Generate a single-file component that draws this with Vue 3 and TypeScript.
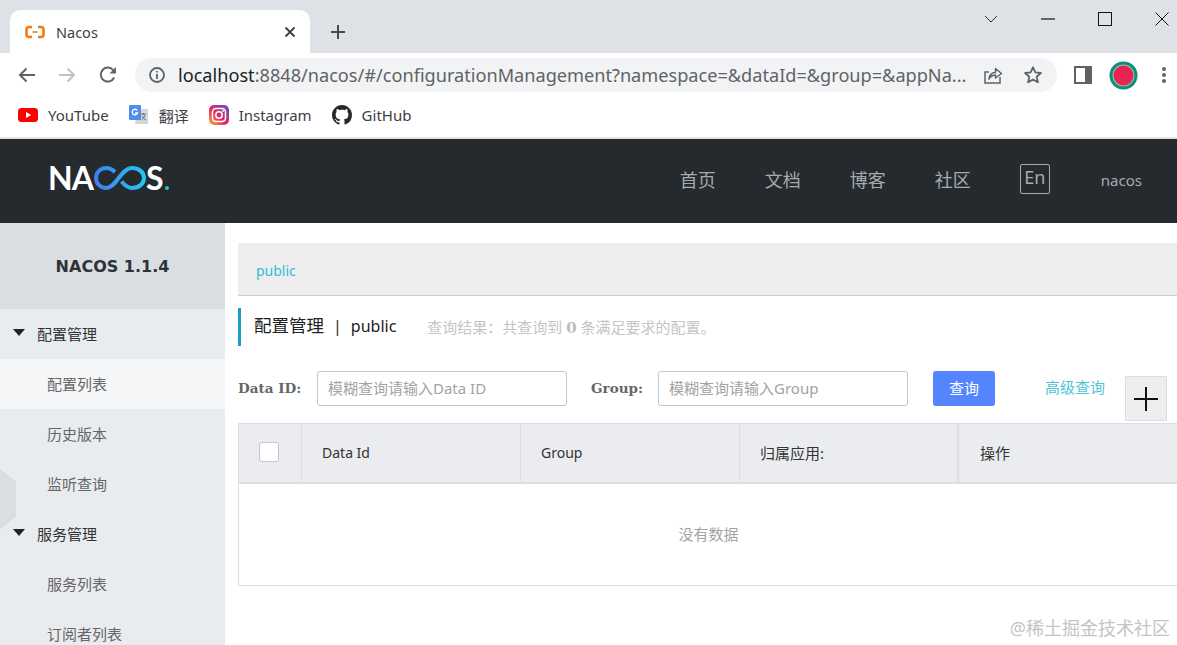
<script setup lang="ts">
const navItems = ['首页', '文档', '博客', '社区']
const columns = ['Data Id', 'Group', '归属应用:', '操作']

interface MenuGroup {
  title: string
  items: { label: string; active?: boolean }[]
}

const menu: MenuGroup[] = [
  {
    title: '配置管理',
    items: [{ label: '配置列表', active: true }, { label: '历史版本' }, { label: '监听查询' }],
  },
  {
    title: '服务管理',
    items: [{ label: '服务列表' }, { label: '订阅者列表' }],
  },
]
</script>

<template>
  <div class="window">
    <div class="tabstrip">
      <div class="tab">
        <svg class="favicon" width="20" height="14" viewBox="0 0 20 14">
          <path d="M7 2H4Q1.500 2 1.500 4.500V9.500Q1.500 12 4 12H7M13 2H16Q18.500 2 18.500 4.500V9.500Q18.500 12 16 12H13" fill="none" stroke="#f07a1a" stroke-width="2.600" />
          <path d="M7.500 7H12.500" stroke="#f07a1a" stroke-width="1.600" />
        </svg>
        <span class="tab-title">Nacos</span>
        <svg class="tab-close" width="12" height="12" viewBox="0 0 12 12">
          <path d="M1.500 1.500L10.500 10.500M10.500 1.500L1.500 10.500" stroke="#3c4043" stroke-width="1.800" />
        </svg>
      </div>
      <svg class="new-tab" width="16" height="16" viewBox="0 0 16 16">
        <path d="M8 1V15M1 8H15" stroke="#45494d" stroke-width="2" />
      </svg>
      <div class="window-buttons">
        <svg width="14" height="8" viewBox="0 0 14 8">
          <path d="M1 1L7 7L13 1" fill="none" stroke="#333" stroke-width="1" />
        </svg>
        <svg width="14" height="14" viewBox="0 0 14 14">
          <path d="M0 7H14" stroke="#111" stroke-width="1.200" />
        </svg>
        <svg width="14" height="14" viewBox="0 0 14 14">
          <rect x="0.500" y="0.500" width="13" height="13" fill="none" stroke="#111" stroke-width="1" />
        </svg>
        <svg width="14" height="14" viewBox="0 0 14 14">
          <path d="M0.500 0.500L13.500 13.500M13.500 0.500L0.500 13.500" stroke="#111" stroke-width="1" />
        </svg>
      </div>
    </div>

    <div class="toolbar">
      <svg width="18" height="16" viewBox="0 0 18 16">
        <path d="M17 8H2M8.500 1.500L2 8L8.500 14.500" fill="none" stroke="#5f6368" stroke-width="2" />
      </svg>
      <svg class="disabled" width="18" height="16" viewBox="0 0 18 16">
        <path d="M1 8H16M9.500 1.500L16 8L9.500 14.500" fill="none" stroke="#bdc1c6" stroke-width="2" />
      </svg>
      <svg class="reload" width="18" height="18" viewBox="0 0 18 18">
        <path d="M15.200 11.500A7 7 0 1 1 14.500 4.500" fill="none" stroke="#5f6368" stroke-width="2" />
        <path d="M17 1V7.500H10.500Z" fill="#5f6368" />
      </svg>
      <div class="omnibox">
        <svg class="info" width="18" height="18" viewBox="0 0 18 18">
          <circle cx="9" cy="9" r="7" fill="none" stroke="#5f6368" stroke-width="1.800" />
          <path d="M9 8V13M9 5V6.600" stroke="#5f6368" stroke-width="1.800" />
        </svg>
        <span class="url"><b>localhost</b>:8848/nacos/#/configurationManagement?namespace=&amp;dataId=&amp;group=&amp;appNa...</span>
        <svg class="share" width="20" height="20" viewBox="0 0 20 20">
          <path d="M17 12V18H2V7H6" fill="none" stroke="#5f6368" stroke-width="1.500" />
          <path d="M6 14C6.500 9.500 9 7.500 12.500 7.500V3.500L18.500 8.500L12.500 13V10C9.500 10 7.500 11.500 6 14Z" fill="none" stroke="#5f6368" stroke-width="1.500" stroke-linejoin="round" />
        </svg>
        <svg class="star" width="20" height="20" viewBox="0 0 20 20">
          <path d="M10 2.200L12.300 7.400L17.900 8L13.700 11.700L14.900 17.300L10 14.400L5.100 17.300L6.300 11.700L2.100 8L7.700 7.400Z" fill="none" stroke="#5f6368" stroke-width="1.800" stroke-linejoin="round" />
        </svg>
      </div>
      <svg class="side-panel" width="18" height="18" viewBox="0 0 18 18">
        <rect width="18" height="18" fill="#5f6368" />
        <rect x="2" y="2" width="9" height="14" fill="#fff" />
      </svg>
      <svg class="avatar" width="29" height="29" viewBox="0 0 29 29">
        <circle cx="14.500" cy="14.500" r="14" fill="#0b8f78" />
        <circle cx="14.500" cy="14.500" r="11" fill="#8cc4b2" />
        <circle cx="14.500" cy="14.500" r="10" fill="#ea2450" />
      </svg>
      <svg class="dots" width="6" height="18" viewBox="0 0 6 18">
        <circle cx="3" cy="3" r="2" fill="#5f6368" />
        <circle cx="3" cy="9" r="2" fill="#5f6368" />
        <circle cx="3" cy="15" r="2" fill="#5f6368" />
      </svg>
    </div>

    <div class="bookmarks">
      <div class="bookmark">
        <svg width="20" height="14" viewBox="0 0 20 14">
          <rect width="20" height="14" rx="3.500" fill="#f00" />
          <path d="M8 4L13.200 7L8 10Z" fill="#fff" />
        </svg>
        <span>YouTube</span>
      </div>
      <div class="bookmark">
        <svg width="20" height="20" viewBox="0 0 20 20">
          <path d="M9 4H19V19H6Z" fill="#d4d6d9" />
          <rect width="12" height="15" rx="1" fill="#4d8cf0" />
          <path d="M8.300 5.500A2.800 2.800 0 1 0 8.600 8H6" fill="none" stroke="#fff" stroke-width="1.300" />
          <path d="M12 9H17M14.500 8V10M16 10C15 13 13.500 14.500 12.500 15M13 11C14 13 15.500 14.500 17 15" fill="none" stroke="#666" stroke-width="0.900" />
        </svg>
        <span>翻译</span>
      </div>
      <div class="bookmark">
        <svg width="20" height="20" viewBox="0 0 20 20">
          <defs>
            <linearGradient id="insta" x1="0" y1="1" x2="1" y2="0">
              <stop offset="0" stop-color="#fdb13d" />
              <stop offset="0.450" stop-color="#e4285f" />
              <stop offset="1" stop-color="#5b4fd6" />
            </linearGradient>
          </defs>
          <rect width="20" height="20" rx="5" fill="url(#insta)" />
          <rect x="3.500" y="3.500" width="13" height="13" rx="3.500" fill="none" stroke="#fff" stroke-width="1.500" />
          <circle cx="10" cy="10" r="3.200" fill="none" stroke="#fff" stroke-width="1.500" />
          <circle cx="14" cy="6" r="0.900" fill="#fff" />
        </svg>
        <span>Instagram</span>
      </div>
      <div class="bookmark">
        <svg width="20" height="20" viewBox="0 0 16 16">
          <path fill="#24292e" d="M8 0C3.580 0 0 3.580 0 8c0 3.540 2.290 6.530 5.470 7.590.4.070.55-.17.55-.38 0-.19-.01-.82-.01-1.490-2.010.37-2.530-.49-2.690-.94-.09-.23-.48-.94-.82-1.130-.28-.15-.68-.52-.01-.53.630-.01 1.080.580 1.230.820.720 1.210 1.870.870 2.330.660.070-.520.280-.870.510-1.070-1.780-.200-3.640-.890-3.640-3.950 0-.870.310-1.590.820-2.150-.080-.200-.360-1.020.080-2.120 0 0 .670-.210 2.200.820.640-.180 1.320-.270 2-.270s1.360.090 2 .270c1.530-1.040 2.200-.820 2.200-.820.440 1.100.160 1.920.080 2.120.510.560.820 1.270.820 2.150 0 3.070-1.870 3.750-3.650 3.950.290.250.540.730.540 1.480 0 1.070-.010 1.930-.010 2.200 0 .210.150.460.550.380A8.013 8.013 0 0 0 16 8c0-4.420-3.580-8-8-8z" />
        </svg>
        <span>GitHub</span>
      </div>
    </div>

    <header class="site-header">
      <div class="logo">
        <span class="logo-na">NA</span>
        <svg width="52" height="24" viewBox="0 0 52 24">
          <defs>
            <linearGradient id="loop" x1="0" y1="0" x2="1" y2="0">
              <stop offset="0" stop-color="#3d7ff0" />
              <stop offset="1" stop-color="#26c6ee" />
            </linearGradient>
          </defs>
          <path d="M21 6C18.500 3.500 15.500 2 12.500 2C6.500 2 2 6.300 2 12C2 17.700 6.500 22 12.500 22C22 22 27 2 38 2C45 2 50 6.300 50 12C50 17.700 45 22 38 22C33 22 30 18.500 27.500 15.500" fill="none" stroke="url(#loop)" stroke-width="4" />
        </svg>
        <span>S</span>
        <i class="logo-dot"></i>
      </div>
      <nav class="site-nav">
        <a v-for="item in navItems" :key="item">{{ item }}</a>
        <span class="lang">En</span>
        <span class="user">nacos</span>
      </nav>
    </header>

    <div class="body">
      <aside class="sidebar">
        <div class="side-title">NACOS 1.1.4</div>
        <div class="hexagon"></div>
        <template v-for="group in menu" :key="group.title">
          <div class="menu-group">
            <i class="caret"></i>
            <span>{{ group.title }}</span>
          </div>
          <div
            v-for="item in group.items"
            :key="item.label"
            class="menu-item"
            :class="{ active: item.active }"
          >
            {{ item.label }}
          </div>
        </template>
      </aside>

      <main class="content">
        <div class="namespace">public</div>

        <div class="page-title">
          <h2>配置管理<span class="sep">|</span><span class="ns">public</span></h2>
          <p>查询结果：共查询到 <b>0</b> 条满足要求的配置。</p>
        </div>

        <form class="filters" @submit.prevent>
          <label class="data-label">Data ID:</label>
          <input class="data-input" placeholder="模糊查询请输入Data ID" />
          <label class="group-label">Group:</label>
          <input class="group-input" placeholder="模糊查询请输入Group" />
          <button class="search" type="submit">查询</button>
          <a class="advanced">高级查询</a>
          <button class="add" type="button" aria-label="新建">
            <svg width="26" height="26" viewBox="0 0 26 26">
              <path d="M13 1V25M1 13H25" stroke="#111" stroke-width="2" />
            </svg>
          </button>
        </form>

        <div class="table">
          <div class="thead">
            <div class="cell check"><i class="checkbox"></i></div>
            <div v-for="col in columns" :key="col" class="cell">{{ col }}</div>
          </div>
          <div class="empty">没有数据</div>
        </div>
      </main>
    </div>

    <div class="watermark">@稀土掘金技术社区</div>
  </div>
</template>

<style scoped>
.window {
  position: relative;
  width: 1177px;
  height: 645px;
  overflow: hidden;
  background: #fff;
  font-family: "Noto Sans", "Noto Sans CJK SC", sans-serif;
  color: #333;
}

/* browser chrome */
.tabstrip {
  display: flex;
  align-items: flex-end;
  height: 53px;
  background: #dee1e6;
}
.tab {
  display: flex;
  align-items: center;
  width: 300px;
  height: 43px;
  margin-left: 10px;
  padding: 0 14px 0 15px;
  box-sizing: border-box;
  background: #fff;
  border-radius: 10px 10px 0 0;
}
.favicon {
  margin-right: 11px;
}
.tab-title {
  flex: 1;
  font-size: 14.500px;
  color: #3c4043;
}
.new-tab {
  margin: 0 0 13px 20px;
}
.window-buttons {
  display: flex;
  align-items: center;
  gap: 43px;
  margin-left: auto;
  padding: 0 8px 0 0;
  height: 38px;
  align-self: flex-start;
}
.toolbar {
  display: flex;
  align-items: center;
  height: 44px;
  padding-left: 18px;
  box-sizing: border-box;
}
.disabled {
  margin-left: 22px;
}
.reload {
  margin-left: 23px;
}
.omnibox {
  display: flex;
  align-items: center;
  width: 922px;
  height: 34px;
  margin-left: 18px;
  padding-left: 13px;
  box-sizing: border-box;
  background: #f1f3f4;
  border-radius: 17px;
}
.url {
  flex: none;
  width: 805px;
  margin-left: 12px;
  font-size: 18.150px;
  white-space: nowrap;
  color: #5f6368;
}
.url b {
  font-weight: 400;
  color: #202124;
}
.star {
  margin-left: 20px;
}
.side-panel {
  margin-left: 17px;
}
.avatar {
  margin-left: 17px;
}
.dots {
  margin-left: 23px;
}
.bookmarks {
  display: flex;
  height: 42px;
  padding: 0 0 4px 18px;
  box-sizing: border-box;
  gap: 20px;
  align-items: center;
  border-bottom: 2px solid #e4e4e4;
}
.bookmark {
  display: flex;
  align-items: center;
  gap: 10px;
  font-size: 15px;
  color: #3c4043;
}

/* site header */
.site-header {
  display: flex;
  align-items: center;
  justify-content: space-between;
  height: 84px;
  background: #252a2f;
}
.logo {
  display: flex;
  align-items: center;
  height: 30px;
  margin: 0 0 6px 48px;
  font-family: "Lato", sans-serif;
  font-size: 32px;
  font-weight: 700;
  line-height: 1;
  color: #fff;
}
.logo-na {
  letter-spacing: -1px;
}
.logo svg {
  margin-left: 1px;
}
.logo-dot {
  width: 4px;
  height: 4px;
  margin: 20px 0 0 2px;
  background: #22c6d6;
  border-radius: 50%;
}
.site-nav {
  display: flex;
  align-items: center;
  padding-right: 35px;
  color: #a7abae;
}
.site-nav a {
  margin: 0 49px 4px 0;
  font-size: 18px;
}
.lang {
  width: 28px;
  height: 28px;
  margin: 0 51px 4px 0;
  border: 1px solid #a7abae;
  border-radius: 2px;
  text-align: center;
  font-size: 18px;
  line-height: 25px;
}
.user {
  margin-bottom: 2px;
  font-size: 15px;
}

/* page body */
.body {
  display: flex;
  height: 422px;
}
.sidebar {
  position: relative;
  flex: none;
  width: 225px;
  background: #e9ecef;
  overflow: hidden;
}
.side-title {
  height: 86px;
  background: #d9dee2;
  text-align: center;
  font-family: "DejaVu Sans", sans-serif;
  font-size: 16px;
  font-weight: 700;
  line-height: 87px;
  color: #2f3338;
}
.hexagon {
  position: absolute;
  left: -18px;
  top: 245px;
  width: 34px;
  height: 62px;
  background: #d9dee2;
  clip-path: polygon(50% 0, 100% 22%, 100% 78%, 50% 100%, 0 78%, 0 22%);
}
.menu-group {
  position: relative;
  display: flex;
  align-items: center;
  height: 50px;
  padding: 0 0 2px 37px;
  box-sizing: border-box;
  font-size: 15px;
  color: #333;
}
.caret {
  position: absolute;
  left: 13px;
  top: 20px;
  border: 6px solid transparent;
  border-top: 7px solid #222;
  border-bottom: 0;
}
.menu-item {
  position: relative;
  height: 50px;
  padding-left: 47px;
  font-size: 15px;
  line-height: 50px;
  color: #666;
}
.menu-item.active {
  background: #f4f6f7;
}
.content {
  flex: 1;
  min-width: 0;
  padding: 20px 0 0 13px;
}
.namespace {
  height: 52px;
  padding-left: 18px;
  background: #eee;
  border-bottom: 1px solid #ccc;
  font-size: 14px;
  line-height: 55px;
  color: #33bcd8;
}
.page-title {
  display: flex;
  align-items: center;
  height: 38px;
  margin-top: 12px;
  padding-left: 13px;
  border-left: 3px solid #1a9fc9;
}
.page-title h2 {
  margin: 0 0 5px;
  font-size: 17.500px;
  font-weight: 400;
  color: #222;
}
.sep {
  margin: 0 9px;
  font-size: 16px;
}
.ns {
  font-size: 16px;
}
.page-title p {
  margin: 0 0 2px 31px;
  font-size: 15px;
  color: #c5c5c5;
}
.page-title b {
  font-family: "DejaVu Serif", serif;
  color: #bdbdbd;
}
.filters {
  display: flex;
  align-items: flex-start;
  height: 35px;
  margin-top: 25px;
}
.filters label {
  font-family: "DejaVu Serif", serif;
  font-size: 13.500px;
  font-weight: 700;
  line-height: 34px;
  color: #666;
}
.data-label {
  width: 79px;
}
.group-label {
  width: 67px;
  margin-left: 24px;
}
.filters input {
  width: 250px;
  height: 35px;
  padding: 0 10px 2px;
  box-sizing: border-box;
  background: #fff;
  border: 1px solid #c4c6cf;
  border-radius: 3px;
  outline: none;
  font-family: inherit;
  font-size: 15px;
}
.filters input::placeholder {
  color: #a3a3a3;
}
.search {
  width: 62px;
  height: 35px;
  margin-left: 25px;
  padding: 0 0 2px;
  background: #5584ff;
  border: 0;
  border-radius: 3px;
  font-family: inherit;
  font-size: 15px;
  color: #fff;
}
.advanced {
  margin-left: 50px;
  font-size: 15px;
  line-height: 33px;
  color: #4dc4d6;
}
.add {
  display: flex;
  align-items: center;
  justify-content: center;
  flex: none;
  width: 42px;
  height: 45px;
  margin: 5px 0 0 20px;
  padding: 0;
  background: #eee;
  border: 1px solid #ddd;
}
.table {
  height: 163px;
  margin-top: 17px;
  box-sizing: border-box;
  border: 1px solid #dcdee3;
  border-right: 0;
}
.thead {
  display: grid;
  grid-template-columns: 63px 219px 219px 219px 1fr;
  height: 58px;
  background: #ebecf0;
  border-bottom: 2px solid #dcdee3;
  box-sizing: content-box;
}
.cell {
  padding-left: 20px;
  border-right: 1px solid #dcdee3;
  font-size: 14px;
  line-height: 58px;
  color: #333;
}
.cell:nth-child(4) {
  border-right-width: 2px;
  font-size: 15px;
}
.cell:last-child {
  padding-left: 21px;
  border-right: 0;
  font-size: 15px;
}
.check {
  display: flex;
  padding: 18px 0 0 20px;
  box-sizing: border-box;
}
.checkbox {
  width: 20px;
  height: 20px;
  background: #fff;
  border: 1px solid #c4c6cf;
  border-radius: 3px;
  box-sizing: border-box;
}
.empty {
  width: 941px;
  height: 100px;
  margin-left: -1px;
  text-align: center;
  font-size: 15px;
  line-height: 100px;
  color: #a3a3a3;
}
.watermark {
  position: absolute;
  right: 7px;
  bottom: 5px;
  font-size: 18px;
  color: #c4c4c4;
}
</style>
